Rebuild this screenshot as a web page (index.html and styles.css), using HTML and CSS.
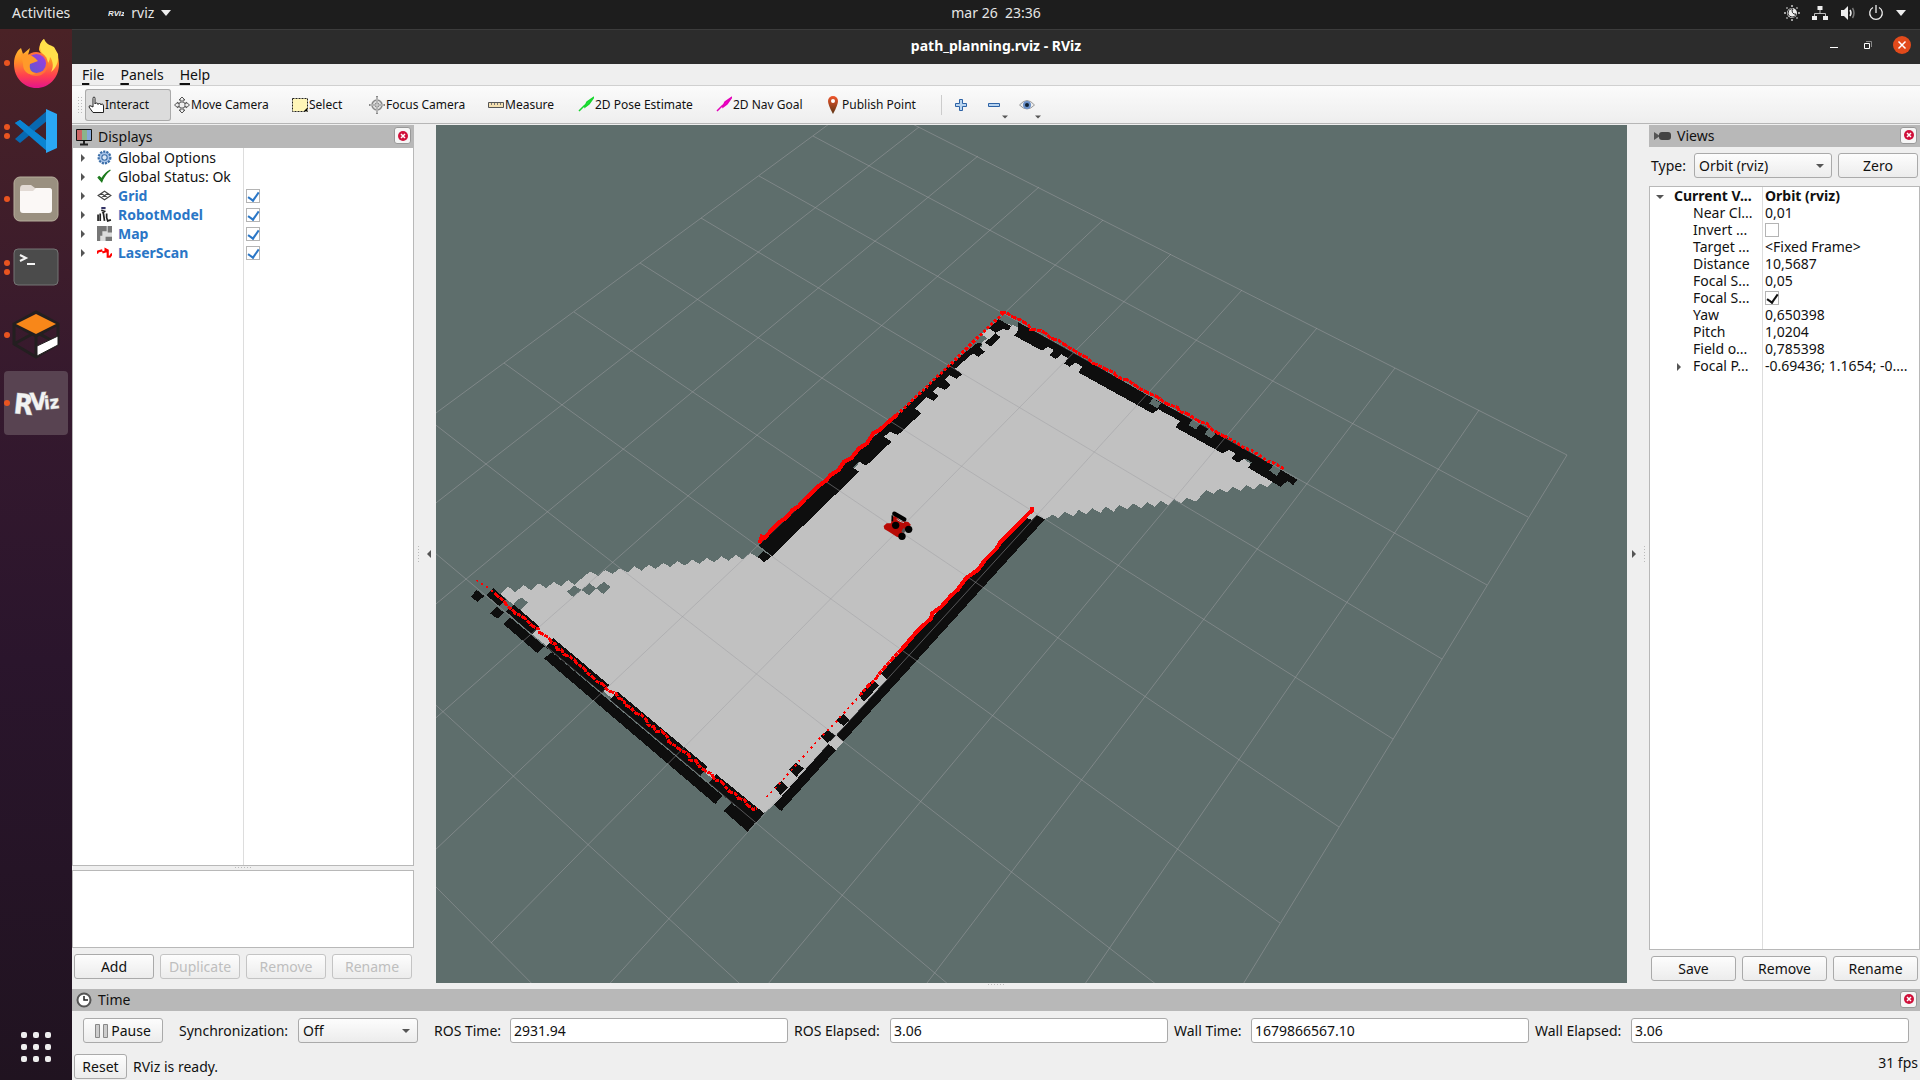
FILE: index.html
```html
<!DOCTYPE html>
<html lang="en">
<head>
<meta charset="utf-8">
<title>path_planning.rviz - RViz</title>
<link rel="stylesheet" href="styles.css">
</head>
<body>
<svg class="defs" aria-hidden="true">
  <defs>
    <linearGradient id="ffBody" x1="0" y1="0" x2="0" y2="1"><stop offset="0" stop-color="#ffd43a"/><stop offset=".45" stop-color="#ff9026"/><stop offset=".75" stop-color="#ff4050"/><stop offset="1" stop-color="#e3148c"/></linearGradient>
    <linearGradient id="ffGlobe" x1="1" y1="0" x2="0" y2="1"><stop offset="0" stop-color="#a13ae0"/><stop offset="1" stop-color="#5a5bd0"/></linearGradient>
    <linearGradient id="pin" x1="0" y1="0" x2="0" y2="1"><stop offset="0" stop-color="#f0562c"/><stop offset="1" stop-color="#5c3413"/></linearGradient>
    <symbol id="close" viewBox="0 0 16 16"><circle cx="8" cy="8" r="5" fill="#d0103a"/><path d="M6 6l4 4M10 6l-4 4" stroke="#fff" stroke-width="1.5"/></symbol>
    <symbol id="right" viewBox="0 0 8 8"><path d="M2 0l4 4-4 4z" fill="#555"/></symbol>
    <symbol id="down" viewBox="0 0 8 8"><path d="M0 2l4 4 4-4z" fill="#555"/></symbol>
  </defs>
</svg>

<header class="topbar">
  <button class="top-item">Activities</button>
  <button class="top-item app-menu">
    <svg width="16" height="14" viewBox="0 0 16 14"><text x="0" y="10" class="mini-logo">RViz</text></svg>
    rviz
    <svg width="10" height="6" viewBox="0 0 10 6"><path d="M0 0h10L5 6z" fill="#eee"/></svg>
  </button>
  <time class="clock">mar 26&nbsp; 23:36</time>
  <div class="tray">
    <svg width="16" height="16" viewBox="0 0 16 16"><circle cx="8" cy="8" r="5" fill="#eee"/><path d="M9 4a3 3 0 0 0 3 5 4 4 0 1 1-3-5" fill="none" stroke="#222"/><path d="M8 0v2M8 14v2M0 8h2M14 8h2M2.500 2.500l1 1M12.500 12.500l1 1M2.500 13.500l1-1M12.500 3.500l1-1" stroke="#ccc" stroke-width="1.500"/></svg>
    <svg width="16" height="16" viewBox="0 0 16 16"><path d="M5.500 1h5v4h-5zM0 11h5v4H0zM11 11h5v4h-5z" fill="#eee"/><path d="M8 5v3.500M2.500 11V8.500h11V11" fill="none" stroke="#bbb"/></svg>
    <svg width="16" height="16" viewBox="0 0 16 16"><path d="M1 5h3l4-4v14l-4-4H1z" fill="#eee"/><path d="M10 5q2 3 0 6" fill="none" stroke="#eee" stroke-width="1.500"/><path d="M12.500 3q3 5 0 10" fill="none" stroke="#777" stroke-width="1.500"/></svg>
    <svg width="16" height="16" viewBox="0 0 16 16"><path d="M5 2.500a6.300 6.300 0 1 0 6 0M8 0v8" fill="none" stroke="#eee" stroke-width="1.300"/></svg>
    <svg width="10" height="6" viewBox="0 0 10 6"><path d="M0 0h10L5 6z" fill="#eee"/></svg>
  </div>
</header>

<div class="desktop">
  <nav class="dock" aria-label="Dock">
    <a href="#" class="tile one" aria-label="Firefox"><svg width="46" height="50" viewBox="0 0 46 50"><path d="M1 26C1 17 5 12 8 10l2 6 7-6-2 7h14l-3-5C26 7 29 3 31 1c2 6 5 7 8 10l2-1c3 5 5 10 5 16 0 14-10 24-22.500 24S1 40 1 26" fill="url(#ffBody)"/><path d="M31 1c-5 4-5 9-2 14 4 3 5 8 3 13 3-2 5-6 5-9 3 4 4 10 1 15 5-4 8-10 7-18L41 9C37 7 33 6 31 1" fill="#ffe04a"/><circle cx="23" cy="26" r="12" fill="#ff7139"/><circle cx="23.500" cy="25.500" r="9.500" fill="url(#ffGlobe)"/><path d="M8 16c6-1 10 1 14 4l3 3-8 3c-1 5 1 8 6 10-8 2-13-3-13-10z" fill="#ff9a2a"/></svg></a>
    <a href="#" class="tile two" aria-label="Visual Studio Code"><svg width="44" height="46" viewBox="0 0 44 46"><path d="M1 15l5-3 31 24v7z" fill="#0a84d2"/><path d="M1 31l5 4L34 12V2L21 13z" fill="#0868b0"/><path d="M1 15l5-3 28 22v10L20 32z" fill="#0a84d2"/><path d="M32 1l11 5v34l-11 5V1z" fill="#2aa7f4"/></svg></a>
    <a href="#" class="tile one" aria-label="Files"><svg width="46" height="50" viewBox="0 0 46 50"><rect x="1" y="3" width="44" height="44" rx="6" fill="#9a9080" stroke="#b7ae9c"/><path d="M7 15q0-4 3-4h8l4 3h14q3 0 3 4v6H7z" fill="#e2dad4"/><path d="M7 17h13l3-3h13q3 0 3 3v19q0 3-3 3H10q-3 0-3-3z" fill="#fbf8f6"/></svg></a>
    <a href="#" class="tile two" aria-label="Terminal"><svg width="46" height="38" viewBox="0 0 46 38"><rect x="1" y="1" width="44" height="36" rx="4" fill="#4b4b4b" stroke="#747474"/><path d="M7 7l6 3-6 3M14 16h8" fill="none" stroke="#f4f4f4" stroke-width="2"/></svg></a>
    <a href="#" class="tile one" aria-label="Gazebo"><svg width="48" height="50" viewBox="0 0 48 50"><path d="M2 14L24 2l22 12v20L24 47 2 34z M2 14l22 12 22-12M2 34l22-12 22 12M24 26v21" fill="none" stroke="#231f20" stroke-width="3"/><path d="M24 4l20 10-20 10L4 14z" fill="#f88719"/><path d="M25 36l21-10v9L25 46z" fill="#fff" stroke="#231f20"/></svg></a>
    <a href="#" class="tile one active" aria-label="RViz"><svg width="48" height="34" viewBox="0 0 48 34"><g class="logo"><text x="2" y="28" font-size="28" transform="rotate(6 10 18)">R</text><text x="18" y="24" font-size="24" transform="rotate(-4 26 16)">V</text><text x="32" y="23" font-size="18" transform="rotate(-6 38 16)">iz</text></g></svg></a>
    <button class="apps" aria-label="Show Applications"><i></i><i></i><i></i><i></i><i></i><i></i><i></i><i></i><i></i></button>
  </nav>

  <main class="window">
    <div class="titlebar">
      <h1>path_planning.rviz - RViz</h1>
      <div class="win-buttons">
        <button aria-label="Minimize"><svg width="18" height="18" viewBox="0 0 18 18"><path d="M5 11.500h8" stroke="#fff"/></svg></button>
        <button aria-label="Restore"><svg width="18" height="18" viewBox="0 0 18 18"><path d="M5.500 7.500h5v5h-5z" fill="none" stroke="#fff"/><path d="M7 5.500h5.500V11" fill="none" stroke="#888"/></svg></button>
        <button aria-label="Close"><svg width="18" height="18" viewBox="0 0 18 18"><circle cx="9" cy="9" r="9" fill="#e24a1b"/><path d="M5.500 5.500l7 7M12.500 5.500l-7 7" stroke="#fff" stroke-width="1.500"/></svg></button>
      </div>
    </div>

    <nav class="menubar"><button><u>F</u>ile</button><button><u>P</u>anels</button><button><u>H</u>elp</button></nav>

    <div class="toolbar">
      <span class="grip"></span>
      <button class="tool t-interact pressed"><svg width="16" height="18" viewBox="0 0 16 18"><path d="M5 11V2.500Q5 1 6 1t1 1.500V8q0-1 1.500-1T10 8.500q0-1 1.500-1t1.500 1.500q0-1 1.200-1T15.500 10v6.500H5L1 11q0-2 2-1z" fill="#fff" stroke="#222"/></svg>Interact</button>
      <button class="tool t-move"><svg width="16" height="18" viewBox="0 0 16 18"><path d="M8 1l3 3H9v2l3 2V6l3.500 3-3.500 3v-2l-3 2v2h2l-3 3-3-3h2v-2l-3-2v2L.500 9 4 6v2l3-2V4H5z" fill="#eee" stroke="#555"/><circle cx="8" cy="9" r="3" fill="none" stroke="#777"/></svg>Move Camera</button>
      <button class="tool t-select"><svg width="16" height="18" viewBox="0 0 16 18"><path d="M.500 2.500h15v13H.500z" fill="#fff6b8" stroke="#222" stroke-dasharray="2 1"/><path d="M12 15l3-3v3z"/></svg>Select</button>
      <button class="tool t-focus"><svg width="16" height="18" viewBox="0 0 16 18"><circle cx="8" cy="9" r="5" fill="#ddd" stroke="#888" stroke-width="1.500"/><circle cx="8" cy="9" r="2" fill="none" stroke="#777"/><path d="M8 0v18M0 9h16" stroke="#888" stroke-width="2"/><path d="M8 1v16M1 9h14" stroke="#ddd"/></svg>Focus Camera</button>
      <button class="tool t-measure"><svg width="16" height="18" viewBox="0 0 16 18"><path d="M.500 6.500h15v5H.500z" fill="#f3dfb0" stroke="#555"/><path d="M3.500 7v2M6.500 7v2M9.500 7v2M12.500 7v2" stroke="#777"/></svg>Measure</button>
      <button class="tool t-pose"><svg width="16" height="18" viewBox="0 0 16 18"><path d="M1 15l6-6M7 10l2-4 7-5-5 7-4 3z" stroke="#17d62e" fill="#1ee636" stroke-width="1.500"/></svg>2D Pose Estimate</button>
      <button class="tool t-nav"><svg width="16" height="18" viewBox="0 0 16 18"><path d="M1 15l6-6M7 10l2-4 7-5-5 7-4 3z" stroke="#e300b9" fill="#f500cb" stroke-width="1.500"/></svg>2D Nav Goal</button>
      <button class="tool t-point"><svg width="16" height="18" viewBox="0 0 16 18"><path d="M8 18Q3 9 3 5a5 5 0 0 1 10 0q0 4-5 13" fill="url(#pin)"/><circle cx="8" cy="5" r="2" fill="#fff"/></svg>Publish Point</button>
      <span class="sep"></span>
      <button class="mini" aria-label="Add tool"><svg width="16" height="16" viewBox="0 0 16 16"><path d="M6.500 2.500h3v4h4v3h-4v4h-3v-4h-4v-3h4z" fill="#b8d4f0" stroke="#2d62a5"/></svg></button>
      <button class="mini" aria-label="Remove tool"><svg width="16" height="16" viewBox="0 0 16 16"><path d="M2.500 6.500h11v3h-11z" fill="#b8d4f0" stroke="#2d62a5"/></svg><svg class="sub" width="6" height="6"><use href="#down"/></svg></button>
      <button class="mini" aria-label="Tool visibility"><svg width="16" height="16" viewBox="0 0 16 16"><path d="M.500 8Q8-1 15.500 8 8 16 .500 8" fill="#eee" stroke="#999"/><circle cx="8" cy="8" r="4" fill="#6a90c8"/><circle cx="8" cy="8" r="2" fill="#123"/></svg><svg class="sub" width="6" height="6"><use href="#down"/></svg></button>
    </div>

    <div class="workspace">
      <section class="panel displays">
        <header class="panel-head">
          <svg width="16" height="18" viewBox="0 0 16 18"><path d="M.500 1.500h15v11H.500z" fill="#8bb48b" stroke="#111"/><path d="M1 2h5v10H1z" fill="#c66"/><path d="M11 2h4v10h-4z" fill="#86a8d8"/><path d="M8 13v3M4 16.500h8" stroke="#222" stroke-width="2"/></svg>
          <h2>Displays</h2>
          <button class="x" aria-label="Close Displays"><svg width="16" height="16"><use href="#close"/></svg></button>
        </header>
        <div class="tree-box">
          <table class="tree">
            <tbody>
            <tr><td><div class="node"><svg class="arrow"><use href="#right"/></svg><svg class="ico" viewBox="0 0 14 14"><circle cx="7" cy="7" r="5.500" fill="#a9c4e8" stroke="#3b6ea8" stroke-width="2" stroke-dasharray="2 1"/><circle cx="7" cy="7" r="2.500" fill="#dce8f6" stroke="#3b6ea8"/></svg>Global Options</div></td><td></td></tr>
            <tr><td><div class="node"><svg class="arrow"><use href="#right"/></svg><svg class="ico" viewBox="0 0 14 14"><path d="M1 8l3.500 4Q7 5 12.500 1 7 4 4.500 9L2 7z" fill="#1d7a1d" stroke="#1d7a1d"/></svg>Global Status: Ok</div></td><td></td></tr>
            <tr class="on"><td><div class="node"><svg class="arrow"><use href="#right"/></svg><svg class="ico" viewBox="0 0 14 14"><path d="M1 7l6-4 6 4-6 4zM4 5l6 4M10 5L4 9" fill="none" stroke="#444"/></svg>Grid</div></td><td><input type="checkbox" checked aria-label="Grid"></td></tr>
            <tr class="on"><td><div class="node"><svg class="arrow"><use href="#right"/></svg><svg class="ico" viewBox="0 0 14 14"><path d="M4 0h4v2H4z" fill="#336"/><path d="M4 3l3 1-2 2M1 7v6M3 6v7M6 6l1 7M9 6v4l1 3 3-1" fill="none" stroke="#222" stroke-width="1.600"/></svg>RobotModel</div></td><td><input type="checkbox" checked aria-label="RobotModel"></td></tr>
            <tr class="on"><td><div class="node"><svg class="arrow"><use href="#right"/></svg><svg class="ico" viewBox="0 0 14 14"><path d="M0 0h14v14H0z" fill="#ddd"/><path d="M0 0h9v5H5v4H3v5H0zM10 0h4v6h-4zM8 10h6v4H8z" fill="#777"/></svg>Map</div></td><td><input type="checkbox" checked aria-label="Map"></td></tr>
            <tr class="on"><td><div class="node"><svg class="arrow"><use href="#right"/></svg><svg class="ico" viewBox="0 0 14 14"><path d="M0 8l1-2 4-1M5 7l3-1V4l2 1v6h2l2-3" fill="none" stroke="#f00" stroke-width="2"/></svg>LaserScan</div></td><td><input type="checkbox" checked aria-label="LaserScan"></td></tr>
            </tbody>
          </table>
        </div>
        <div class="hsplit"></div>
        <div class="help-box"></div>
        <div class="btns"><button class="btn">Add</button><button class="btn" disabled>Duplicate</button><button class="btn" disabled>Remove</button><button class="btn" disabled>Rename</button></div>
      </section>

      <div class="gutter left"><span class="vgrip"></span><button class="collapse" aria-label="Collapse left panel"><svg width="8" height="8" viewBox="0 0 8 8"><path d="M6 0L2 4l4 4z" fill="#555"/></svg></button></div>

      <svg class="scene" viewBox="436 125 1191 858" preserveAspectRatio="xMidYMid slice" role="img" aria-label="3D view">
        <g shape-rendering="crispEdges">
          <!-- free space -->
          <g transform="translate(436 120) scale(.39541 .33333)" fill="#c1c1c1">
            <path d="M1430 610L1450 625 1470 620 1570 690 1570 1178 1540 1197 1520 1185 1340 1420 830 1420 830 1315 850 1300 1300 745 1380 680 1380 642 1397 627z"/>
            <path transform="translate(0 1200)" d="M163 222L183 200 200 217 222 195 240 211 260 190 278 204 298 186 317 199 334 180 350 194 390 154 410 168 428 150 447 161 465 145 485 157 502 139 520 152 538 134 555 147 575 129 592 141 611 124 630 137 648 119 666 131 685 114 703 127 722 109 740 122 758 105 776 118 795 99 815 113 848 105 940 0 1490 0 1490 20 1142 490 1030 665 1012 690 992 672 855 855 828 880 808 880 243 343 262 320z"/>
          </g>
          <path transform="translate(1000 120) scale(.40816 .33333)" fill="#c1c1c1" d="M-10 620L28 610 45 625 400 860 560 980 668 1085 655 1102 637 1090 622 1108 604 1095 590 1113 571 1101 556 1118 538 1106 523 1122 505 1110 480 1145 458 1134 445 1150 427 1138 412 1155 393 1142 379 1160 360 1146 347 1165 326 1150 312 1168 293 1155 278 1175 260 1160 246 1178 226 1165 212 1183 193 1170 180 1188 158 1175 143 1195 123 1178 108 1197 93 1185 60 1225 -10 1305z"/>
          <!-- unknown cells -->
          <g transform="translate(436 520) scale(.39541 .33333)" fill="#5e6e6c">
            <path d="M331 215L350 197 368 210 347 231zM368 210L388 190 405 205 386 226zM405 205L424 185 441 200 423 222zM195 252L215 232 232 247 213 270z"/>
            <path d="M1365-545L1380-557 1395-545 1378-532z"/>
          </g>
          <!-- occupied cells -->
          <g transform="translate(436 120) scale(.39541 .33333)" fill="#0e0e0e">
            <path d="M815 1275L985 1083 1150 905 1295 738 1370 668 1382 672 1375 682 1388 695 1372 711 1358 700 1313 746 1330 763 1317 777 1298 765 1287 780 1302 795 1287 810 1268 800 1256 815 1272 828 1258 843 1240 831 1211 865 1227 880 1168 945 1148 935 1133 950 1152 965 1088 1037 1070 1025 1055 1043 1070 1055 850 1308zM813 1310L828 1294 848 1308 830 1328zM1388 668L1415 640 1428 652 1403 680zM1398 625L1422 598 1455 618 1447 632 1435 626 1415 638z"/>
            <path transform="translate(0 1200)" d="M88 230L103 210 122 228 105 246zM137 280L153 260 172 278 155 296zM170 312L188 293 275 379 256 399zM273 415L293 397 725 828 706 852zM728 873L747 849 808 907 788 935zM127 225L145 205 178 238 160 258zM177 274L197 254 262 320 243 344zM277 381L297 355 438 495 420 520zM440 540L458 514 687 740 668 768zM690 790L708 762 830 880 808 910z"/>
            <path transform="translate(0 1200)" d="M1518-14L1540-2 1385 200 1030 665 1012 645 1350 205zM992 672L1012 690 873 873 855 855zM1490-8L1508 0 1350 205 1142 480 1125 460zM1068 525L1105 480 1120 497 1083 545zM1013 600L1030 582 1045 600 1030 618zM973 648L990 630 1012 647 990 670zM893 748L910 728 930 745 912 770zM855 803L873 783 890 803 872 825z"/>
          </g>
          <g transform="translate(1000 120) scale(.40816 .33333)">
            <path fill="#0e0e0e" d="M45 607L180 697 360 825 550 950 730 1080 718 1095 705 1083 687 1100 608 1043 617 1027 600 1015 583 1028 567 1015 577 1000 560 990 545 1000 430 922 441 903 388 868 373 880 192 757 202 740 185 728 170 740 157 730 167 715 150 703 137 717 121 705 132 690 117 680 103 692 35 647 45 630z"/>
            <path fill="#5e6e6c" d="M365 850L375 836 395 850 385 865zM462 915L473 897 492 910 480 928zM501 942L512 925 530 937 518 955zM660 1052L670 1035 690 1045 678 1068zM0 595L12 585 40 605 28 617z"/>
          </g>
        </g>
        <!-- ground grid, 10 x 10 cells -->
        <g stroke="#a0a0a4" stroke-opacity=".5" fill="none">
          <path d="M863 99L1567 455M813 136L1528 517M759 176L1487 585M701 218L1442 659M640 263L1393 739M574 312L1339 827M504 363L1280 923M428 419L1215 1030M347 479L1143 1148M259 543L1062 1279M164 613L972 1427"/>
          <path d="M863 99L164 613M919 127L220 671M978 156L281 732M1039 187L346 797M1103 220L416 868M1171 254L491 943M1242 290L572 1025M1317 328L660 1113M1395 368L755 1209M1479 410L859 1313M1567 455L972 1427"/>
        </g>
        <!-- laser hits -->
        <g class="laser" transform="translate(436 120) scale(.39541 .33333)">
          <path class="thick" d="M818 1270L824 1250 832 1254 848 1230 862 1215 870 1205 884 1195 902 1170 918 1158 935 1135 948 1122 962 1103 985 1083 998 1065 1018 1050 1032 1025 1050 1015 1070 985 1090 970 1106 940 1122 930 1140 910 1165 885"/>
          <path class="dots" d="M1165 885L1190 858 1215 828 1240 803 1255 783 1280 757 1298 737 1325 705 1345 682 1370 652 1390 630 1410 607 1435 580"/>
          <path class="thick" d="M1508 1162L1508 1170 1495 1185 1478 1206 1455 1233 1428 1265 1418 1285 1390 1318 1370 1350 1340 1375 1320 1408 1300 1430 1278 1460 1255 1480 1252 1495 1220 1530 1205 1550 1180 1585"/>
          <path class="mid" d="M1180 1585L1155 1615 1125 1655 1110 1680 1095 1695 1075 1722"/>
          <path class="sparse" d="M1075 1722L1035 1775 1000 1820 965 1862 925 1915 890 1962 858 2005 828 2040"/>
          <path class="sparse" d="M102 1380L125 1398 148 1420"/>
          <path class="mid" d="M148 1420L170 1442 182 1460 192 1468 200 1480 212 1485 225 1495 240 1515 260 1528 262 1538 285 1552 292 1568 302 1572 307 1588 318 1590 322 1602 338 1610 350 1620 357 1632 372 1642 382 1658 395 1670 407 1685 422 1692 435 1712 455 1720 462 1735 475 1740 478 1755 492 1762 505 1780 520 1785 532 1800 536 1815 550 1820 558 1835 570 1832 585 1850 588 1865 602 1875 618 1890 628 1895 640 1905 642 1920 658 1922 665 1938 680 1952 698 1962 705 1980 722 1985 732 2000 742 2015 758 2022 765 2035 780 2040 788 2055 802 2068 812 2065"/>
        </g>
        <g class="laser" transform="translate(1000 120) scale(.40816 .33333)">
          <path class="mid" d="M0 578L15 578 30 590 50 600 70 615 75 628 100 632 115 642 125 655 145 662 165 680 180 690 195 702 212 712 228 730 245 738 260 748 280 758 282 765 300 778 312 780 330 795 345 808 365 820 385 830 400 845 415 855 435 862 440 875 458 880 475 895 490 905 508 912 515 925 535 940 550 950"/>
          <path class="dots" d="M550 948L575 965 600 985 615 990 640 1010 655 1023 668 1027 698 1048"/>
        </g>
        <!-- robot -->
        <g transform="translate(850 480) scale(.33333)">
          <path d="M101 138L110 130H123L127 110 136 108 150 122 175 126 183 135 168 146 158 158 150 173 140 170 118 156 103 147z" fill="#b80a05"/>
          <path d="M160 144l8 6-6 10-8-4z" fill="#555"/>
          <path d="M140 118l10 6 12 4" stroke="#bbb" stroke-width="3"/>
          <path d="M133 101l30 17" stroke="#000" stroke-width="13" stroke-linecap="round"/>
          <path d="M127 106v18" stroke="#000" stroke-width="5"/>
          <circle cx="137" cy="136" r="11"/><circle cx="156" cy="169" r="11"/><circle cx="176" cy="148" r="11"/>
        </g>
      </svg>

      <div class="gutter right"><button class="collapse" aria-label="Collapse right panel"><svg width="8" height="8"><use href="#right"/></svg></button><span class="vgrip"></span></div>

      <section class="panel views">
        <header class="panel-head">
          <svg width="18" height="16" viewBox="0 0 18 16"><path d="M1 4l6 4-6 4z" fill="#555"/><rect x="6" y="4" width="12" height="8" rx="3" fill="#444"/></svg>
          <h2>Views</h2>
          <button class="x" aria-label="Close Views"><svg width="16" height="16"><use href="#close"/></svg></button>
        </header>
        <div class="type-row"><label for="type">Type:</label><span class="select"><select id="type"><option>Orbit (rviz)</option></select></span><button class="btn">Zero</button></div>
        <div class="props-box">
          <table class="props">
            <tbody>
            <tr class="group"><th><svg class="arrow"><use href="#down"/></svg>Current V...</th><td>Orbit (rviz)</td></tr>
            <tr><th>Near Cl...</th><td>0,01</td></tr>
            <tr><th>Invert ...</th><td><input type="checkbox" aria-label="Invert Z Axis"></td></tr>
            <tr><th>Target ...</th><td>&lt;Fixed Frame&gt;</td></tr>
            <tr><th>Distance</th><td>10,5687</td></tr>
            <tr><th>Focal S...</th><td>0,05</td></tr>
            <tr><th>Focal S...</th><td><input type="checkbox" checked aria-label="Focal Shape Fixed Size"></td></tr>
            <tr><th>Yaw</th><td>0,650398</td></tr>
            <tr><th>Pitch</th><td>1,0204</td></tr>
            <tr><th>Field o...</th><td>0,785398</td></tr>
            <tr class="sub-group"><th><svg class="arrow"><use href="#right"/></svg>Focal P...</th><td>-0.69436; 1.1654; -0....</td></tr>
            </tbody>
          </table>
        </div>
        <div class="btns"><button class="btn">Save</button><button class="btn">Remove</button><button class="btn">Rename</button></div>
      </section>
    </div>
    <div class="hsplit wide"></div>

    <section class="time">
      <header class="panel-head">
        <svg width="16" height="16" viewBox="0 0 16 16"><circle cx="8" cy="8" r="6.500" fill="#fff" stroke="#555" stroke-width="2"/><path d="M8 4v4h4" fill="none" stroke="#222" stroke-width="1.500"/></svg>
        <h2>Time</h2>
        <button class="x" aria-label="Close Time"><svg width="16" height="16"><use href="#close"/></svg></button>
      </header>
      <div class="time-row">
        <button class="btn pause"><svg width="14" height="16" viewBox="0 0 14 16"><path d="M.500 1.500h4v13h-4zM8.500 1.500h4v13h-4z" fill="#ccc" stroke="#888"/></svg>Pause</button>
        <label for="sync" class="l-sync">Synchronization:</label><span class="select sync"><select id="sync"><option>Off</option></select></span>
        <label for="rt" class="l-rt">ROS Time:</label><input id="rt" type="text" value="2931.94">
        <label for="re" class="l-el">ROS Elapsed:</label><input id="re" type="text" value="3.06">
        <label for="wt" class="l-wt">Wall Time:</label><input id="wt" type="text" value="1679866567.10">
        <label for="we" class="l-el">Wall Elapsed:</label><input id="we" type="text" value="3.06">
      </div>
    </section>
    <footer class="status"><button class="btn">Reset</button><span>RViz is ready.</span><span class="fps">31 fps</span></footer>
  </main>
</div>
</body>
</html>
```
FILE: styles.css
```css
* { box-sizing: border-box; }
body { margin: 0; min-height: 100vh; display: flex; flex-direction: column; background: #efefef; color: #111; font: 14px/18px "Noto Sans", "Open Sans", sans-serif; }
button, input, select { font: inherit; color: inherit; margin: 0; padding: 0; }
button { border: 0; background: none; }
svg { display: block; flex: none; }
h1, h2 { margin: 0; font-size: 14px; }
h2 { font-weight: 400; }
.defs { position: absolute; width: 0; height: 0; }

.topbar { height: 29px; background: #1d1d1d; color: #e6e6e6; display: flex; align-items: center; padding: 0 14px 4px 12px; position: relative; }
.top-item { display: flex; align-items: center; gap: 7px; }
.app-menu { margin-left: 38px; }
.mini-logo { font: italic 700 8px "Liberation Sans", sans-serif; fill: #eee; }
.clock { position: absolute; left: 72px; right: 0; text-align: center; pointer-events: none; }
.tray { margin-left: auto; display: flex; align-items: center; gap: 12px; }

.desktop { flex: 1; display: flex; }
.dock { width: 72px; flex: none; background: linear-gradient(#4a2226, #35192e 35%, #2a152c 60%, #201320); display: flex; flex-direction: column; align-items: center; gap: 4px; padding: 2px 0 16px; }
.tile { width: 64px; height: 64px; border-radius: 4px; display: flex; align-items: center; justify-content: center; position: relative; }
.tile.active { background: #584351; }
.tile::before, .two::after { content: ""; position: absolute; left: 0; top: 29px; width: 6px; height: 6px; border-radius: 50%; background: #e95420; }
.two::before { top: 25px; }
.two::after { top: 34px; }
.logo { font-family: "DejaVu Sans Condensed", "DejaVu Sans", sans-serif; font-weight: 700; fill: #f2f2f2; stroke: #999; stroke-width: 1px; paint-order: stroke; }
.apps { margin-top: auto; display: grid; grid-template-columns: repeat(3, 6px); gap: 6px; padding: 3px; }
.apps i { width: 6px; height: 6px; border-radius: 2px; background: #eee; }

.window { flex: 1; min-width: 0; display: flex; flex-direction: column; }
.titlebar { height: 35px; background: #2c2c2c; border-top: 1px solid #3c3c3c; color: #fff; display: flex; align-items: center; justify-content: center; position: relative; padding-bottom: 2px; }
.win-buttons { position: absolute; right: 9px; top: 6px; display: flex; gap: 16px; }
.menubar { height: 22px; display: flex; align-items: center; gap: 16px; padding-left: 10px; border-bottom: 1px solid #d0d0d0; }
.menubar u { text-underline-offset: 3px; text-decoration-thickness: 2px; }
.toolbar { height: 38px; display: flex; align-items: center; padding-left: 5px; background: linear-gradient(#fbfbfb, #eee); border-bottom: 1px solid #b6b6b6; font-size: 12px; }
.grip { width: 5px; height: 18px; margin-right: 3px; background: radial-gradient(circle, #bbb 1px, transparent 1px) 0 0 / 3px 3px; }
.tool { height: 32px; padding-left: 3px; display: flex; align-items: center; gap: 1px; white-space: nowrap; }
.pressed { background: #dcdcdc; border-radius: 3px; box-shadow: inset 0 0 0 1px #aaa; }
.t-interact { width: 86px; }
.t-move { width: 118px; }
.t-select { width: 77px; }
.t-focus { width: 119px; }
.t-measure { width: 90px; }
.t-pose { width: 138px; }
.t-nav { width: 109px; }
.t-point { width: 119px; }
.sep { width: 1px; height: 20px; background: #ccc; margin-right: 11px; }
.mini { width: 33px; height: 32px; display: flex; align-items: center; position: relative; }
.sub { position: absolute; left: 16px; bottom: 1px; width: 6px; height: 6px; }

.workspace { flex: 1; display: grid; grid-template-columns: 342px 22px minmax(0, 1fr) 22px 271px; padding-top: 1px; min-height: 400px; }
.panel { display: flex; flex-direction: column; min-width: 0; }
.panel-head { height: 22px; flex: none; background: #b8b8b8; display: flex; align-items: center; gap: 6px; padding: 0 3px 0 4px; }
.x { width: 17px; height: 17px; margin: 0 0 2px auto; border: 1px solid #999; border-radius: 3px; background: #f6f6f6; display: flex; align-items: center; justify-content: center; }
.displays .panel-head { height: 23px; }
.tree-box, .props-box, .help-box { border: 1px solid #b8b8b8; background: #fff; }
.tree-box { flex: 1; border-top: 0; background: linear-gradient(#ddd, #ddd) 170px 0 / 1px 100% no-repeat #fff; }
.tree, .props { border-collapse: collapse; table-layout: fixed; width: 100%; }
td, th { padding: 0; text-align: left; font-weight: 400; white-space: nowrap; }
.tree td { height: 19px; }
.tree td:first-child { width: 173px; }
.node { display: flex; align-items: center; height: 19px; padding-left: 6px; }
.arrow { width: 8px; height: 8px; margin-right: 10px; }
.ico { width: 15px; height: 15px; margin-right: 6px; }
.on { color: #2a76c6; }
.on .node { font-weight: 700; }
input[type=checkbox] { appearance: none; display: block; width: 14px; height: 14px; border: 1px solid #b4b4b4; background: #fff; position: relative; }
input[type=checkbox]:checked::after { content: ""; position: absolute; left: 3px; top: 0; width: 5px; height: 9px; border: solid currentColor; border-width: 0 2px 2px 0; transform: rotate(35deg); }
.hsplit { height: 4px; flex: none; background: radial-gradient(circle, #bbb 1px, transparent 1px) 0 0 / 3px 3px; background-clip: content-box; padding: 1px calc(50% - 9px) 0; }
.hsplit.wide { height: 6px; padding-bottom: 2px; }
.help-box { height: 78px; flex: none; }
.btns { display: flex; gap: 6px; padding: 6px 2px 4px; }
.btn { height: 25px; flex: 1; border: 1px solid #aaa; border-radius: 3px; background: linear-gradient(#fdfdfd, #ececec); text-align: center; }
.btn:disabled { color: #bebebe; border-color: #c4c4c4; }
.gutter { display: flex; align-items: center; justify-content: space-between; padding: 0 3px; }
.vgrip { width: 3px; height: 18px; background: radial-gradient(circle, #bbb 1px, transparent 1px) 0 0 / 3px 3px; }
.scene { width: 100%; height: 100%; min-height: 0; background: #5e6e6c; }
.laser path { fill: none; stroke: #f00; stroke-width: 3px; vector-effect: non-scaling-stroke; shape-rendering: crispEdges; }
.laser .thick { stroke-width: 4px; }
.laser .dots { stroke-dasharray: 3 2; }
.laser .mid { stroke-width: 3px; stroke-dasharray: 6 1 4 1; }
.laser .sparse { stroke-width: 2px; stroke-dasharray: 2 4; }

.type-row { display: flex; align-items: center; gap: 6px; padding: 6px 2px 8px; }
.type-row label { width: 37px; }
.type-row .select { width: 138px; }
.type-row .btn { flex: 1; }
.select { display: block; position: relative; }
.select::after { content: ""; position: absolute; right: 8px; top: 11px; border: 4px solid transparent; border-top-color: #555; pointer-events: none; }
select { appearance: none; width: 100%; height: 25px; border: 1px solid #aaa; border-radius: 3px; background: linear-gradient(#fdfdfd, #ececec); padding-left: 4px; }
.props-box { flex: 1; background: linear-gradient(#ddd, #ddd) 112px 0 / 1px 100% no-repeat #fff; }
.props th { width: 115px; padding-left: 43px; }
.props tr { height: 17px; line-height: 17px; }
.props .arrow { display: inline-block; }
.props .group th, .props .group td { font-weight: 700; }
.props .group th { padding-left: 6px; }
.props .sub-group th { padding-left: 25px; }
.views .btns { padding-bottom: 2px; }

.time-row { display: flex; align-items: center; gap: 6px; padding: 7px 11px; }
.pause { flex: none; width: 80px; display: flex; align-items: center; justify-content: center; gap: 2px; }
.time-row label { flex: none; white-space: nowrap; }
.l-sync { width: 113px; margin-left: 10px; }
.sync { width: 120px; flex: none; }
.l-rt { width: 70px; margin-left: 10px; }
.l-el { width: 90px; }
.l-wt { width: 71px; }
.time-row input { flex: 1; min-width: 0; height: 25px; border: 1px solid #aaa; border-radius: 3px; background: #fff; padding-left: 3px; }
.status { display: flex; align-items: center; gap: 6px; padding: 4px 2px 2px; }
.status .btn { flex: none; width: 53px; }
.fps { margin-left: auto; align-self: flex-start; }
```
